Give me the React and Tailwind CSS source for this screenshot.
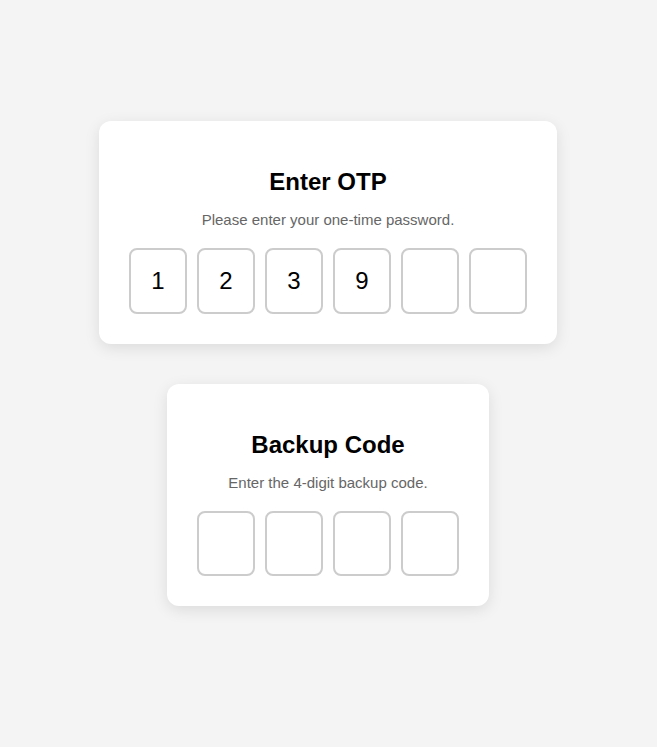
import React from 'react';

const OtpCard = ({ title, subtitle, values }) => {
  return (
    <div className="bg-white rounded-xl shadow-[0_4px_15px_rgba(0,0,0,0.1)] px-[30px] pt-[47px] pb-[30px] flex flex-col items-center">
      <h2 className="text-[24px] leading-[28px] font-bold text-black">{title}</h2>
      <p className="mt-[15px] text-[15px] leading-[17px] text-[#666]">{subtitle}</p>
      <div className="mt-[20px] flex gap-[10px]">
        {values.map((v, i) => (
          <input
            key={i}
            type="text"
            maxLength={1}
            readOnly
            value={v}
            className="w-[58px] h-[65.5px] border-2 border-[#ccc] rounded-lg text-center text-[24px] text-black bg-white outline-none"
          />
        ))}
      </div>
    </div>
  );
};

const App = () => {
  return (
    <div className="min-h-screen bg-[#f4f4f4] flex flex-col items-center pt-[121px] pr-px gap-[40px] font-['Liberation_Sans',Arial,sans-serif]">
      <OtpCard
        title="Enter OTP"
        subtitle="Please enter your one-time password."
        values={['1', '2', '3', '9', '', '']}
      />
      <OtpCard
        title="Backup Code"
        subtitle="Enter the 4-digit backup code."
        values={['', '', '', '']}
      />
    </div>
  );
};

export default App;
